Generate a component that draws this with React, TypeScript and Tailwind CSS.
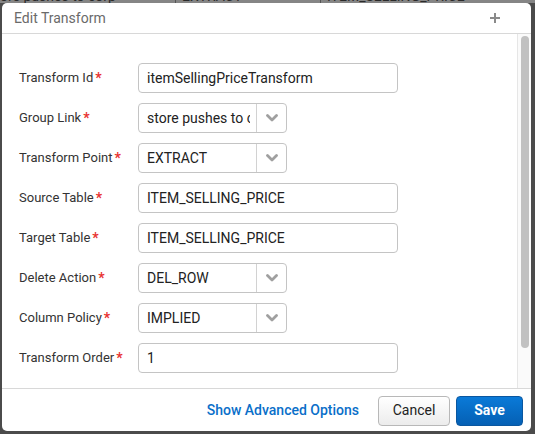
import React from "react";

const font = { fontFamily: "Roboto, 'Liberation Sans', sans-serif" };

function Chevron() {
  return (
    <svg width="12" height="8" viewBox="0 0 12 8">
      <polyline points="1.5,1.5 6,6 10.5,1.5" fill="none" stroke="#a0a0a0" strokeWidth="2.8" strokeLinecap="round" strokeLinejoin="round" />
    </svg>
  );
}

function Label({ text }: { text: string }) {
  return (
    <div className="w-[119px] shrink-0 text-[13px] text-[#333] flex items-center">
      <span>{text}</span>
      <span className="text-[#e8312f] ml-[2px] text-[14px] font-bold leading-none">*</span>
    </div>
  );
}

function TextRow({ label, value }: { label: string; value: string }) {
  return (
    <div className="flex items-center h-[30px]">
      <Label text={label} />
      <div className="w-[260px] h-[30px] border border-[#c4c4c4] rounded-[4px] flex items-center px-[8px] text-[14px] text-[#222] bg-white">
        {value}
      </div>
    </div>
  );
}

function SelectRow({ label, value }: { label: string; value: string }) {
  return (
    <div className="flex items-center h-[30px]">
      <Label text={label} />
      <div className="w-[149px] h-[30px] border border-[#c4c4c4] rounded-[4px] flex items-center bg-white overflow-hidden">
        <div className="flex-1 ml-[8px] mr-[6px] text-[14px] text-[#222] whitespace-nowrap overflow-hidden">{value}</div>
        <div className="w-[30px] h-full border-l border-[#d2d2d2] flex items-center justify-center">
          <Chevron />
        </div>
      </div>
    </div>
  );
}

export default function App() {
  return (
    <div className="w-[535px] h-[434px] bg-[#4b4b4b] relative overflow-hidden" style={font}>
      <div className="h-[3px] bg-[#858585] relative overflow-hidden">
        <div className="flex text-[14px] text-[#2a2a2a] leading-[14px] -mt-[11px] whitespace-nowrap">
          <span className="ml-[0px] w-[175px]">ore pushes to corp</span>
          <span className="w-[145px] border-l border-[#555] pl-[6px]">EXTRACT</span>
          <span className="border-l border-[#555] pl-[6px]">ITEM_SELLING_PRICE</span>
        </div>
      </div>
      <div className="absolute left-[2px] top-[3px] w-[529px] h-[428px] bg-white rounded-[5px] flex flex-col overflow-hidden">
        <div className="h-[31px] shrink-0 border-b border-[#d8d8d8] flex items-center justify-between pl-[12px] pr-[30px]">
          <span className="text-[14px] text-[#6a6a6a]">Edit Transform</span>
          <svg width="12" height="12" viewBox="0 0 12 12">
            <path d="M6 1v10M1 6h10" stroke="#8a8a8a" strokeWidth="2" />
          </svg>
        </div>
        <div className="flex-1 flex min-h-0">
          <div className="flex-1 pl-[17px] pt-[29px] flex flex-col gap-[10px]">
            <TextRow label="Transform Id" value="itemSellingPriceTransform" />
            <SelectRow label="Group Link" value="store pushes to corp" />
            <SelectRow label="Transform Point" value="EXTRACT" />
            <TextRow label="Source Table" value="ITEM_SELLING_PRICE" />
            <TextRow label="Target Table" value="ITEM_SELLING_PRICE" />
            <SelectRow label="Delete Action" value="DEL_ROW" />
            <SelectRow label="Column Policy" value="IMPLIED" />
            <TextRow label="Transform Order" value="1" />
          </div>
          <div className="w-[14px] shrink-0 border-l border-[#e6e6e6] bg-[#fafafa] pl-[3px] pt-[2px]">
            <div className="w-[8px] h-[312px] rounded-full bg-[#c1c1c1]" />
          </div>
        </div>
        <div className="h-[43px] shrink-0 border-t border-[#d8d8d8] flex items-center justify-end pr-[8px] pt-[1px]">
          <span className="text-[14px] font-medium text-[#0a6fc9] mr-[19px]">Show Advanced Options</span>
          <button className="w-[72px] h-[30px] rounded-[4px] border border-[#b8b8b8] bg-gradient-to-b from-[#ffffff] to-[#ececec] text-[14px] text-[#222] mr-[6px]">
            Cancel
          </button>
          <button className="w-[67px] h-[30px] rounded-[4px] border border-[#0a57a0] bg-gradient-to-b from-[#0a7ad8] to-[#0560b4] text-[14px] font-bold text-white">
            Save
          </button>
        </div>
      </div>
    </div>
  );
}
